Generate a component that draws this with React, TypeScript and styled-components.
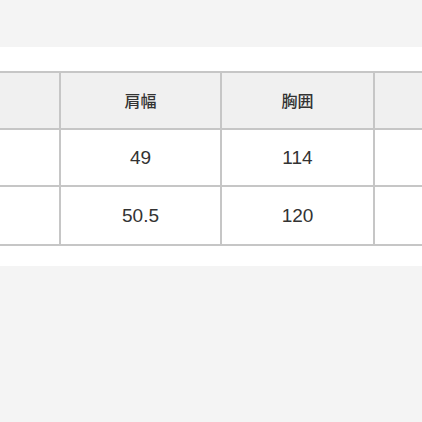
import React from 'react';
import styled, { createGlobalStyle } from 'styled-components';

const GlobalStyle = createGlobalStyle`
  html, body {
    margin: 0;
    padding: 0;
    background: #f4f4f4;
  }
  body {
    font-family: "Liberation Sans", "Noto Sans CJK JP", sans-serif;
    width: 422px;
    height: 422px;
    overflow: hidden;
  }
`;

const headers = ['', '肩幅', '胸囲', ''];
const rows = [
  ['', '49', '114', ''],
  ['', '50.5', '120', ''],
];

export default function App() {
  return (
    <>
      <GlobalStyle />
      <Band>
        <Grid>
          {headers.map((h, i) => (
            <HeadCell key={`h${i}`}>{h}</HeadCell>
          ))}
          {rows.map((r, ri) =>
            r.map((v, ci) => (
              <BodyCell key={`${ri}-${ci}`} tall={ri === rows.length - 1}>
                {v}
              </BodyCell>
            )),
          )}
        </Grid>
      </Band>
    </>
  );
}

const Band = styled.div`
  margin-top: 47px;
  background: #ffffff;
  padding: 24px 0 20px;
  overflow: hidden;
`;

const Grid = styled.div`
  display: grid;
  grid-template-columns: 59px 159px 151px 1fr;
  gap: 2px;
  padding: 2px 0;
  background: #c6c6c6;
`;

const HeadCell = styled.div`
  height: 55px;
  display: flex;
  align-items: center;
  justify-content: center;
  background: #f0f0f0;
  color: #333333;
  font-family: "Noto Sans CJK JP", sans-serif;
  font-weight: 500;
  font-size: 16px;
  padding-bottom: 2px;
  box-sizing: border-box;
`;

const BodyCell = styled.div<{ tall?: boolean }>`
  height: ${p => (p.tall ? 57 : 55)}px;
  display: flex;
  align-items: center;
  justify-content: center;
  background: #ffffff;
  color: #333333;
  font-family: "Liberation Sans", sans-serif;
  font-size: 19px;
`;
